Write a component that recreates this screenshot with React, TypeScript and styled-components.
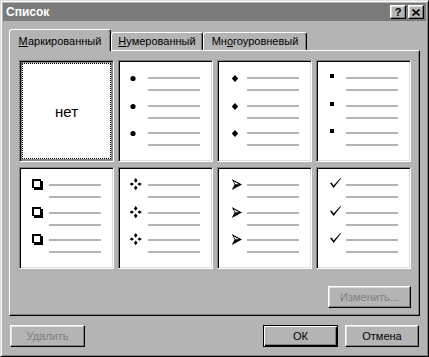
import React from 'react'
import styled, { createGlobalStyle } from 'styled-components'

const BG = '#b4b4b4'

const GlobalStyle = createGlobalStyle`
  html, body {
    margin: 0;
    padding: 0;
    background: ${BG};
  }
  body {
    font-family: "Liberation Sans", Arial, sans-serif;
    font-size: 11px;
  }
`

type Kind = 'dot' | 'diamond' | 'square' | 'box' | 'cross' | 'arrow' | 'check'

const Window = styled.div`
  width: 429px;
  height: 357px;
  box-sizing: border-box;
  background: ${BG};
  border: 1px solid;
  border-color: #dcdcdc #000 #000 #dcdcdc;
  box-shadow: inset 1px 1px #fff, inset -1px -1px #808080;
  padding: 2px;
  display: flex;
  flex-direction: column;
`

const TitleBar = styled.div`
  height: 18px;
  background: #7b7b7b;
  display: flex;
  align-items: center;
  padding: 0 2px 0 3px;
  color: #fff;
  font-weight: bold;
  font-size: 12px;
`

const Title = styled.span`
  flex: 1;
`

const TitleButton = styled.div<{ $gap?: number }>`
  width: 16px;
  height: 14px;
  box-sizing: border-box;
  margin-left: ${p => p.$gap ?? 0}px;
  background: ${BG};
  border: 1px solid;
  border-color: #fff #000 #000 #fff;
  box-shadow: inset -1px -1px #808080, inset 1px 1px #dfdfdf;
  display: flex;
  align-items: center;
  justify-content: center;
  color: #000;
  font-size: 11px;
  font-weight: bold;
  line-height: 1;
`

const Body = styled.div`
  flex: 1;
  display: flex;
  flex-direction: column;
  padding: 8px 6px 0 6px;
`

const TabRow = styled.div`
  display: flex;
  align-items: flex-end;
  height: 21px;
  position: relative;
  z-index: 1;
`

const Tab = styled.div<{ $active?: boolean; $w: number }>`
  width: ${p => p.$w}px;
  box-sizing: border-box;
  height: ${p => (p.$active ? 22 : 18)}px;
  margin-bottom: ${p => (p.$active ? -1 : 0)}px;
  padding-top: ${p => (p.$active ? 4 : 1)}px;
  background: ${BG};
  border: 1px solid;
  border-bottom: none;
  border-color: #fff #000 transparent #fff;
  border-radius: 3px 3px 0 0;
  box-shadow: inset -1px 0 #808080;
  text-align: center;
  line-height: 14px;
  color: #000;
`

const Panel = styled.div`
  height: 266px;
  box-sizing: border-box;
  border: 1px solid;
  border-color: #fff #000 #000 #fff;
  box-shadow: inset -1px -1px #808080;
  padding: 9px 8px 0 9px;
  display: flex;
  flex-direction: column;
`

const Grid = styled.div`
  display: grid;
  grid-template-columns: repeat(4, 95px);
  grid-auto-rows: 102px;
  column-gap: 4px;
  row-gap: 5px;
`

const Cell = styled.div<{ $selected?: boolean }>`
  box-sizing: border-box;
  border: 1px solid;
  border-color: #808080 #fff #fff #808080;
  box-shadow: ${p => (p.$selected ? 'inset 1px 1px #000' : 'inset 1px 1px #000, inset -1px -1px #dfdfdf')};
  background: ${p => (p.$selected ? '#868686' : '#fff')};
  padding: ${p => (p.$selected ? '2px' : '1px')};
  display: flex;
`

const NoneFace = styled.div`
  flex: 1;
  background: #fff;
  border: 1px dotted #000;
  display: flex;
  align-items: center;
  justify-content: center;
  font-size: 15px;
  color: #000;
`

const Face = styled.div`
  flex: 1;
  background: #fff;
  display: flex;
  flex-direction: column;
  padding-top: 15px;
`

const Item = styled.div`
  display: flex;
  height: 28px;
`

const Mark = styled.svg`
  width: 28px;
  height: 14px;
  margin-top: -6px;
  flex: none;
`

const Lines = styled.div`
  display: flex;
  flex-direction: column;
  gap: 10px;
`

const Line = styled.div`
  width: 52px;
  height: 2px;
  background: #b4b4b4;
`

const EditRow = styled.div`
  display: flex;
  justify-content: flex-end;
  margin-top: 17px;
`

const Footer = styled.div`
  display: flex;
  gap: 7px;
  margin-top: 9px;
  padding: 0 1px;
`

const Button = styled.button<{ $default?: boolean; $w: number }>`
  width: ${p => p.$w}px;
  height: 22px;
  box-sizing: border-box;
  padding: 0;
  margin: 0;
  font-family: inherit;
  font-size: 11px;
  color: ${p => (p.disabled ? '#808080' : '#000')};
  background: ${BG};
  border: 1px solid;
  border-color: ${p => (p.$default ? '#000' : '#fff #000 #000 #fff')};
  box-shadow: ${p =>
    p.$default
      ? 'inset 1px 1px #fff, inset -1px -1px #000, inset -2px -2px #808080'
      : 'inset -1px -1px #808080, inset 1px 1px #dfdfdf'};
`

const Spacer = styled.div`
  flex: 1;
`

const dia = (cx: number, cy: number, rx: number, ry: number) =>
  `${cx},${cy - ry} ${cx + rx},${cy} ${cx},${cy + ry} ${cx - rx},${cy}`

const Marker: React.FC<{ kind: Kind }> = ({ kind }) => (
  <Mark viewBox="0 0 28 14">
    {kind === 'dot' && <circle cx="13" cy="7.5" r="2.6" fill="#000" />}
    {kind === 'diamond' && <polygon points={dia(16, 7.5, 3.2, 3.4)} fill="#000" />}
    {kind === 'square' && <rect x="12" y="3" width="4" height="4" fill="#000" />}
    {kind === 'box' && (
      <g>
        <rect x="13" y="3" width="9" height="9" fill="#000" />
        <rect x="11" y="1" width="9" height="9" fill="#000" />
        <rect x="13" y="3" width="6" height="6" fill="#fff" />
      </g>
    )}
    {kind === 'cross' && (
      <g fill="#000">
        <polygon points={dia(15.7, 2.4, 1.8, 2.4)} />
        <polygon points={dia(15.7, 9.8, 1.8, 2.4)} />
        <polygon points={dia(11.8, 6.1, 2.2, 1.7)} />
        <polygon points={dia(19.6, 6.1, 2.2, 1.7)} />
      </g>
    )}
    {kind === 'arrow' && (
      <g>
        <polygon points="12.7,1 23,6.5 12.7,12 15.6,6.5" fill="#000" />
        <polygon points="14.6,3.2 20,6.2 16.4,6.2" fill="#fff" />
      </g>
    )}
    {kind === 'check' && (
      <path d="M12 5 L13.6 4.4 L15.6 7.4 L22.4 0 L23 0.6 L15.6 10 Z" fill="#000" />
    )}
  </Mark>
)

const BulletCell: React.FC<{ kind: Kind }> = ({ kind }) => (
  <Cell>
    <Face>
      {[0, 1, 2].map(i => (
        <Item key={i}>
          <Marker kind={kind} />
          <Lines>
            <Line />
            <Line />
          </Lines>
        </Item>
      ))}
    </Face>
  </Cell>
)

const kinds: Kind[] = ['dot', 'diamond', 'square', 'box', 'cross', 'arrow', 'check']

const App: React.FC = () => {
  return (
    <>
      <GlobalStyle />
      <Window>
        <TitleBar>
          <Title>Список</Title>
          <TitleButton>?</TitleButton>
          <TitleButton $gap={2}>
            <svg width="8" height="7" viewBox="0 0 8 7">
              <path d="M0.5 0.5 L7.5 6.5 M7.5 0.5 L0.5 6.5" stroke="#000" strokeWidth="1.6" />
            </svg>
          </TitleButton>
        </TitleBar>
        <Body>
          <TabRow>
            <Tab $active $w={102}>
              <u>М</u>аркированный
            </Tab>
            <Tab $w={92}>
              <u>Н</u>умерованный
            </Tab>
            <Tab $w={104}>
              Мн<u>о</u>гоуровневый
            </Tab>
          </TabRow>
          <Panel>
            <Grid>
              <Cell $selected>
                <NoneFace>нет</NoneFace>
              </Cell>
              {kinds.map(k => (
                <BulletCell key={k} kind={k} />
              ))}
            </Grid>
            <EditRow>
              <Button $w={83} disabled>
                Изменить...
              </Button>
            </EditRow>
          </Panel>
          <Footer>
            <Button $w={75} disabled>
              Удалить
            </Button>
            <Spacer />
            <Button $w={75} $default>
              ОК
            </Button>
            <Button $w={74}>Отмена</Button>
          </Footer>
        </Body>
      </Window>
    </>
  )
}

export default App
